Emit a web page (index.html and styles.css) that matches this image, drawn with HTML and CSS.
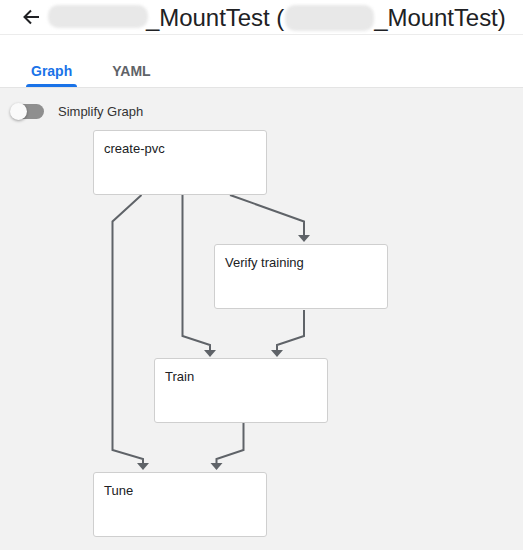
FILE: index.html
```html
<!DOCTYPE html>
<html>
<head>
<meta charset="utf-8">
<link rel="stylesheet" href="styles.css">
</head>
<body>
<div class="page">
  <header class="topbar">
    <svg class="back" width="24" height="24" viewBox="0 0 24 24"><path d="M20 12H5.5M12 5.5L5.5 12l6.5 6.5" fill="none" stroke="#202124" stroke-width="2"/></svg>
    <span class="blob blob1"></span>
    <span class="title t1">_MountTest (</span>
    <span class="blob blob2"></span>
    <span class="title t2">_MountTest)</span>
  </header>
  <nav class="tabs">
    <div class="tab active">Graph</div>
    <div class="tab">YAML</div>
  </nav>
  <main class="canvas">
    <div class="toggle-row">
      <span class="switch"><span class="track"></span><span class="knob"></span></span>
      <span class="toggle-label">Simplify Graph</span>
    </div>
    <div class="graph">
      <svg class="edges" width="523" height="462" viewBox="0 88 523 462">
        <g fill="none" stroke="#5f6368" stroke-width="2">
          <polyline points="141.5,195 112.5,221.5 112.5,450 143,459 143,464"/>
          <polyline points="182.5,195 182.5,336 210,345 210,351"/>
          <polyline points="230,195 304,221.5 304,236"/>
          <polyline points="304,310 304,336 277,345 277,351"/>
          <polyline points="243.5,423 243.5,450 216.5,459 216.5,464"/>
        </g>
        <g fill="#5f6368">
          <polygon points="137,463 149,463 143,470"/>
          <polygon points="204,350 216,350 210,357"/>
          <polygon points="298,235 310,235 304,242"/>
          <polygon points="271,350 283,350 277,357"/>
          <polygon points="210.5,463 222.5,463 216.5,470"/>
        </g>
      </svg>
      <div class="node n-pvc">create-pvc</div>
      <div class="node n-verify">Verify training</div>
      <div class="node n-train">Train</div>
      <div class="node n-tune">Tune</div>
    </div>
  </main>
</div>
</body>
</html>
```
FILE: styles.css
```css
* { box-sizing: border-box; }
html, body { margin: 0; padding: 0; }
body {
  font-family: "Liberation Sans", Arial, sans-serif;
  background: #fff;
  width: 523px;
  height: 550px;
  overflow: hidden;
}
.page { display: flex; flex-direction: column; height: 550px; }
.topbar {
  height: 35px;
  border-bottom: 1px solid #ececec;
  display: flex;
  align-items: center;
  padding-left: 19px;
  position: relative;
}
.back { flex: none; }
.title {
  font-family: "Liberation Sans", Arial, sans-serif;
  font-size: 24px;
  letter-spacing: -0.05px;
  color: #202124;
  line-height: 34px;
  white-space: nowrap;
  margin-top: 1px;
}
.blob {
  display: inline-block;
  background: #e8e8e8;
  border-radius: 10px;
  filter: blur(1.5px);
  flex: none;
}
.blob1 { width: 100px; height: 23px; margin-left: 5px; margin-right: -2px; margin-top: -2px; }
.blob2 { width: 89px; height: 26px; margin-left: 1px; margin-right: 0; margin-top: 1px; }
.tabs {
  height: 53px;
  display: flex;
  align-items: flex-end;
  padding-left: 26px;
  border-bottom: 1px solid #e4e4e4;
}
.tab {
  font-size: 14px;
  font-weight: 700;
  color: #5f6368;
  height: 25px;
  line-height: 18px;
  padding: 0 5px;
  margin-right: 30px;
  position: relative;
}
.tab.active { color: #1a73e8; }
.tab.active::after {
  content: "";
  position: absolute;
  left: 0; right: 0; bottom: 0;
  height: 3px;
  background: #1a73e8;
  border-radius: 3px 3px 0 0;
}
.canvas {
  flex: 1;
  background: #f2f2f2;
  position: relative;
}
.toggle-row {
  display: flex;
  align-items: center;
  height: 20px;
  margin-top: 13px;
  padding-left: 10px;
}
.switch { position: relative; width: 34px; height: 17px; flex: none; }
.track {
  position: absolute; left: 2px; top: 1px;
  width: 32px; height: 15px; border-radius: 8px;
  background: #8f8f8f;
}
.knob {
  position: absolute; left: 0; top: 0;
  width: 17px; height: 17px; border-radius: 50%;
  background: #fafafa;
  box-shadow: 0 1px 3px rgba(0,0,0,0.35);
}
.toggle-label {
  margin-left: 14px;
  font-size: 13px;
  color: #333;
}
.graph { position: absolute; left: 0; top: 0; width: 523px; height: 462px; }
.edges { position: absolute; left: 0; top: 0; }
.node {
  position: absolute;
  width: 174px;
  height: 65px;
  background: #fff;
  border: 1px solid #cfcfcf;
  border-radius: 3px;
  padding: 9px 10px;
  font-size: 13px;
  line-height: 18px;
  color: #202124;
}
.n-pvc { left: 93px; top: 42px; }
.n-verify { left: 214px; top: 156px; }
.n-train { left: 154px; top: 270px; }
.n-tune { left: 93px; top: 384px; }
```
